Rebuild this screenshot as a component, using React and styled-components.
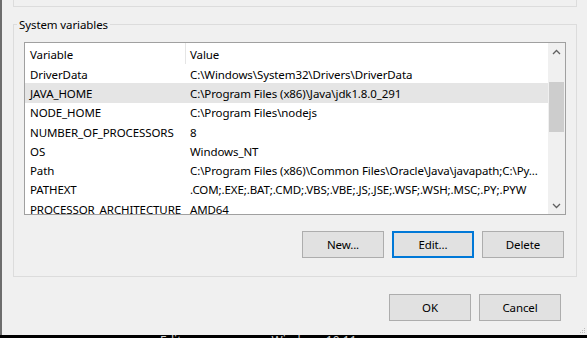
import React from "react";
import styled, { createGlobalStyle } from "styled-components";

const GlobalStyle = createGlobalStyle`
  *, *::before, *::after { box-sizing: border-box; }
  body { margin: 0; background: #000; }
  #root { width: 587px; height: 338px; overflow: hidden; }
`;

const Window = styled.div`
  position: relative;
  width: 587px;
  height: 335px;
  background: #f0f0f0;
  border-left: 2px solid #6d6d6d;
  display: flex;
  flex-direction: column;
  font-family: "Noto Sans", "Open Sans", sans-serif;
  font-size: 11.5px;
  letter-spacing: -0.1px;
  color: #000;
`;

const PrevGroup = styled.div`
  margin-left: 11px;
  width: 564px;
  height: 7px;
  border: 1px solid #dcdcdc;
  border-top: none;
`;

const Group = styled.fieldset`
  margin: 9px 0 0 11px;
  width: 564px;
  height: 261px;
  padding: 0;
  min-width: 0;
  border: 1px solid #dcdcdc;
`;

const Legend = styled.legend`
  margin-left: 3px;
  padding: 1px 2px 0;
  line-height: 16px;
`;

const GroupBody = styled.div`
  padding: 9px 10px 0 10px;
  display: flex;
  flex-direction: column;
`;

const ListBox = styled.div`
  height: 173px;
  border: 1px solid #a0a0a0;
  background: #fff;
  display: flex;
  overflow: hidden;
`;

const ListContent = styled.div`
  flex: 1;
  min-width: 0;
  overflow: hidden;
`;

const Columns = styled.div`
  display: grid;
  grid-template-columns: 161px 1fr;
  height: ${(p) => (p.$header ? "21px" : "19.3px")};
  background: ${(p) => (p.$selected ? "#e5e5e5" : "transparent")};
  white-space: nowrap;
`;

const Cell = styled.div`
  padding: 1px 0 0 ${(p) => (p.$first ? "5px" : "4px")};
  overflow: hidden;
  height: 100%;
  display: flex;
  align-items: center;
  border-right: ${(p) => (p.$divider ? "1px solid #e5e5e5" : "none")};
`;

const ScrollBar = styled.div`
  width: 17px;
  background: #f0f0f0;
  display: flex;
  flex-direction: column;
`;

const ArrowBox = styled.div`
  height: 17px;
  display: flex;
  align-items: center;
  justify-content: center;
  margin-top: ${(p) => (p.$down ? "auto" : "0")};
`;

const Thumb = styled.div`
  margin: 22px 1px 0;
  height: 50px;
  background: #cdcdcd;
`;

const ButtonRow = styled.div`
  display: flex;
  justify-content: flex-end;
  gap: 8px;
  margin-top: 16px;
  padding-right: 2px;
`;

const DialogRow = styled.div`
  display: flex;
  justify-content: flex-end;
  gap: 8px;
  margin-top: 17px;
  padding-right: 26px;
`;

const Button = styled.button`
  width: 82px;
  height: 27px;
  padding: 0;
  background: #e1e1e1;
  border: 1px solid ${(p) => (p.$focused ? "#0078d7" : "#adadad")};
  box-shadow: ${(p) => (p.$focused ? "inset 0 0 0 1px #0078d7" : "none")};
  font-family: inherit;
  font-size: inherit;
  letter-spacing: inherit;
  color: #000;
`;

const Grip = styled.svg`
  position: absolute;
  right: 1px;
  bottom: 1px;
`;

const Taskbar = styled.div`
  height: 3px;
  overflow: hidden;
  background: #000;
  display: flex;
  font-family: "Noto Sans", sans-serif;
  font-size: 12px;
  line-height: 12px;
  color: #cfcfcf;
  padding-left: 160px;
  gap: 90px;
`;

const Chevron = ({ down }) => (
  <svg width="9" height="6" viewBox="0 0 9 6">
    <polyline
      points={down ? "1,1 4.5,4.5 8,1" : "1,5 4.5,1.5 8,5"}
      fill="none"
      stroke="#606060"
      strokeWidth="1.3"
    />
  </svg>
);

const rows = [
  ["DriverData", "C:\\Windows\\System32\\Drivers\\DriverData"],
  ["JAVA_HOME", "C:\\Program Files (x86)\\Java\\jdk1.8.0_291", true],
  ["NODE_HOME", "C:\\Program Files\\nodejs"],
  ["NUMBER_OF_PROCESSORS", "8"],
  ["OS", "Windows_NT"],
  ["Path", "C:\\Program Files (x86)\\Common Files\\Oracle\\Java\\javapath;C:\\Py..."],
  ["PATHEXT", ".COM;.EXE;.BAT;.CMD;.VBS;.VBE;.JS;.JSE;.WSF;.WSH;.MSC;.PY;.PYW"],
  ["PROCESSOR_ARCHITECTURE", "AMD64"],
];

export default function App() {
  return (
    <>
      <GlobalStyle />
      <Window>
        <PrevGroup />
        <Group>
          <Legend>System variables</Legend>
          <GroupBody>
            <ListBox>
              <ListContent>
                <Columns $header>
                  <Cell $first $divider>Variable</Cell>
                  <Cell>Value</Cell>
                </Columns>
                {rows.map(([name, value, selected]) => (
                  <Columns key={name} $selected={selected}>
                    <Cell $first>{name}</Cell>
                    <Cell>{value}</Cell>
                  </Columns>
                ))}
              </ListContent>
              <ScrollBar>
                <ArrowBox>
                  <Chevron />
                </ArrowBox>
                <Thumb />
                <ArrowBox $down>
                  <Chevron down />
                </ArrowBox>
              </ScrollBar>
            </ListBox>
            <ButtonRow>
              <Button>New...</Button>
              <Button $focused>Edit...</Button>
              <Button>Delete</Button>
            </ButtonRow>
          </GroupBody>
        </Group>
        <DialogRow>
          <Button>OK</Button>
          <Button>Cancel</Button>
        </DialogRow>
        <Grip width="7" height="7" viewBox="0 0 7 7">
          <rect x="5" y="1" width="1" height="1" fill="#bdbdbd" />
          <rect x="3" y="3" width="1" height="1" fill="#bdbdbd" />
          <rect x="5" y="3" width="1" height="1" fill="#bdbdbd" />
          <rect x="1" y="5" width="1" height="1" fill="#bdbdbd" />
          <rect x="3" y="5" width="1" height="1" fill="#bdbdbd" />
          <rect x="5" y="5" width="1" height="1" fill="#bdbdbd" />
        </Grip>
      </Window>
      <Taskbar>
        <span>Edit</span>
        <span>Windows 10.11</span>
      </Taskbar>
    </>
  );
}
